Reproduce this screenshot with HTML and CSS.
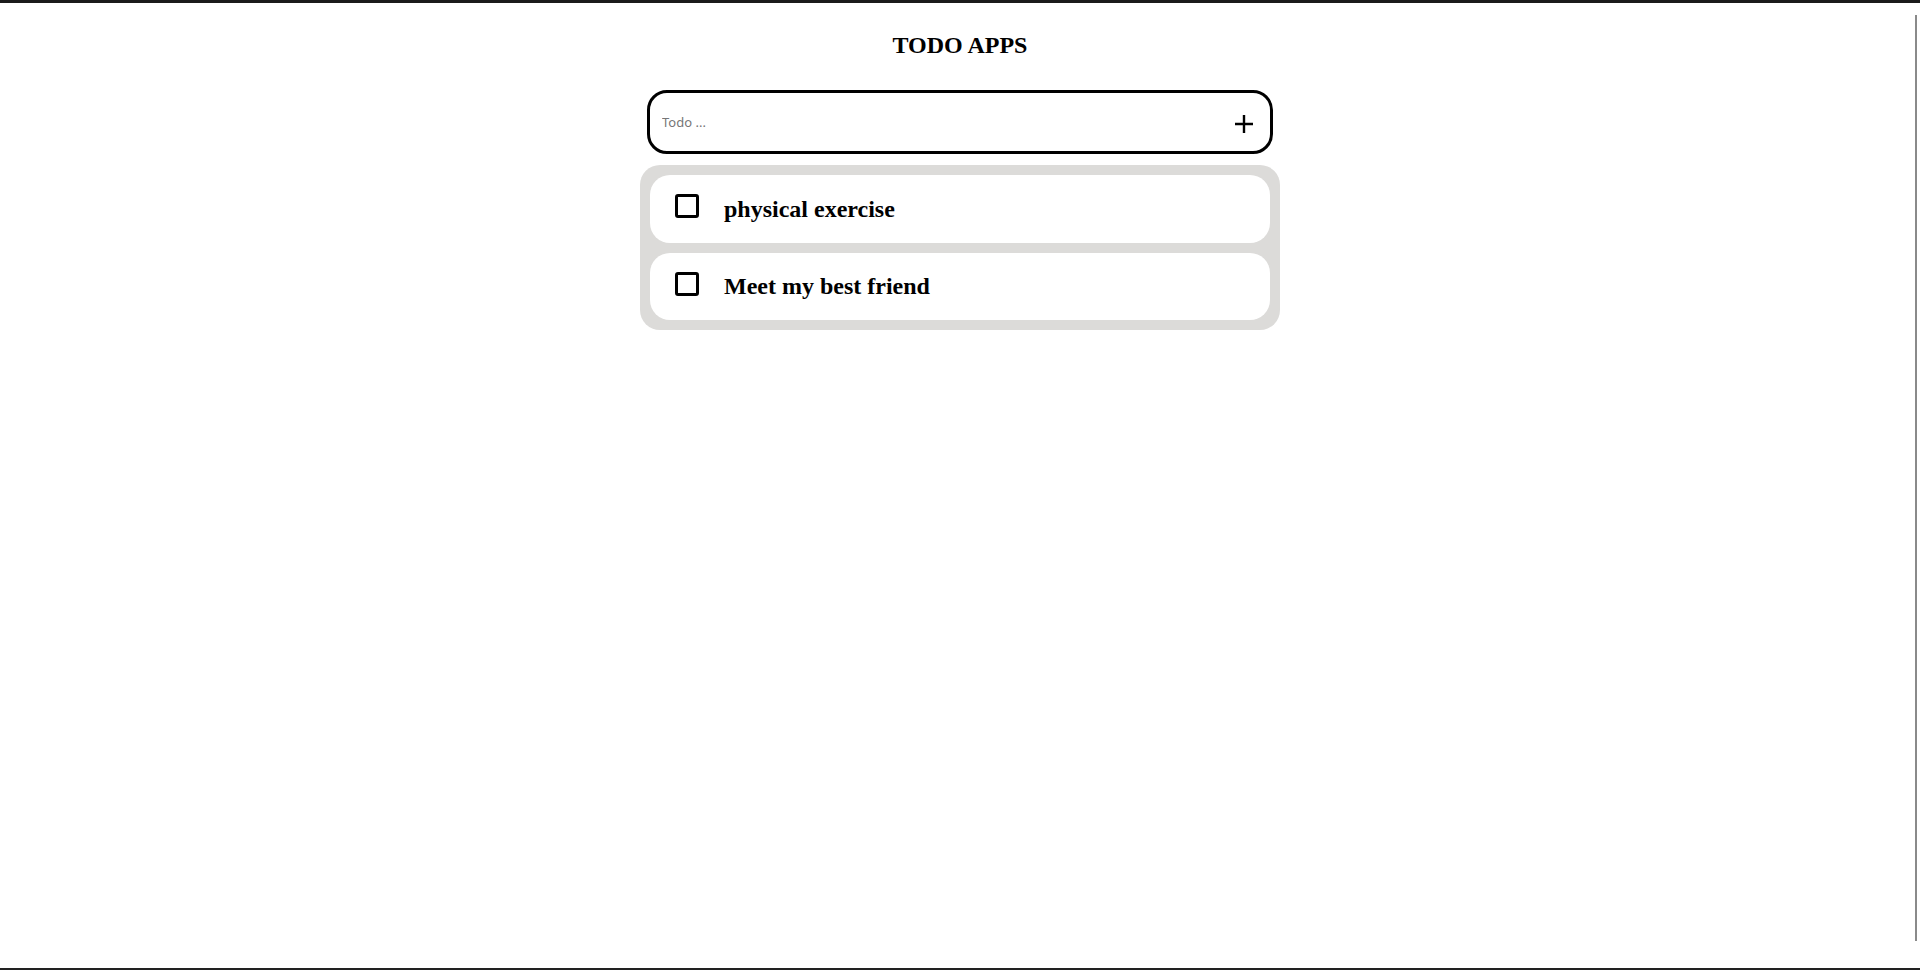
FILE: index.html
```html
<!DOCTYPE html>
<html lang="en">
<head>
<meta charset="utf-8">
<title>TODO APPS</title>
<link rel="stylesheet" href="styles.css">
</head>
<body>
<div class="page">
  <h2 class="title">TODO APPS</h2>
  <form class="todo-form" onsubmit="return false">
    <input class="todo-input" type="text" placeholder="Todo ...">
    <button class="add-btn" type="button" aria-label="Add">
      <svg width="20" height="20" viewBox="0 0 20 20" aria-hidden="true">
        <path d="M10 1 V19 M1 10 H19" stroke="#000" stroke-width="2.4" fill="none"/>
      </svg>
    </button>
  </form>
  <ul class="todo-list">
    <li class="todo-item">
      <span class="check"></span>
      <span class="todo-text">physical exercise</span>
    </li>
    <li class="todo-item">
      <span class="check"></span>
      <span class="todo-text">Meet my best friend</span>
    </li>
  </ul>
</div>
<div class="edge-line"></div>
</body>
</html>
```

FILE: styles.css
```css
* { box-sizing: border-box; }

html, body {
  margin: 0;
  padding: 0;
  background: #fff;
}

body {
  font-family: "Liberation Serif", "Times New Roman", serif;
  color: #000;
}

.page {
  height: 970px;
  border-top: 3px solid #1b1b1b;
  border-bottom: 2px solid #222;
  display: flex;
  flex-direction: column;
  align-items: center;
}

.title {
  margin: 28px 0 0;
  font-size: 24px;
  line-height: 28px;
  font-weight: 700;
}

.todo-form {
  margin-top: 31px;
  width: 626px;
  height: 64px;
  border: 3px solid #000;
  border-radius: 20px;
  display: flex;
  align-items: center;
  padding: 0 16px 0 12px;
}

.todo-input {
  flex: 1;
  border: none;
  outline: none;
  padding: 0;
  font-family: "Noto Sans", "Open Sans", sans-serif;
  font-size: 13px;
  color: #000;
  background: transparent;
}

.todo-input::placeholder {
  color: #767676;
}

.add-btn {
  border: none;
  background: transparent;
  padding: 0;
  margin-top: 4px;
  width: 20px;
  height: 20px;
  display: flex;
  cursor: pointer;
}

.todo-list {
  list-style: none;
  margin: 11px 0 0;
  width: 640px;
  padding: 10px;
  background: #dcdbd9;
  border-radius: 20px;
  display: flex;
  flex-direction: column;
  gap: 10px;
}

.todo-item {
  height: 67.5px;
  background: #fff;
  border-radius: 20px;
  display: flex;
  align-items: center;
  padding-left: 25px;
  gap: 25px;
}

.check {
  width: 24px;
  height: 24px;
  border: 3px solid #000;
  border-radius: 3px;
  margin-bottom: 5px;
  flex: none;
}

.todo-text {
  font-size: 24px;
  font-weight: 700;
  line-height: 28px;
}

.edge-line {
  position: fixed;
  left: 1915px;
  top: 15px;
  width: 2px;
  height: 926px;
  background: #8a8a8a;
}
```
